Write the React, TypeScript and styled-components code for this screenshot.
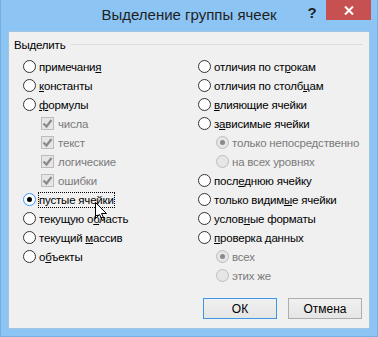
import React from "react";
import styled, { createGlobalStyle } from "styled-components";

const GlobalStyle = createGlobalStyle`
  html, body {
    margin: 0;
    padding: 0;
    background: #ffffff;
  }
  body {
    font-family: "Liberation Sans", Arial, sans-serif;
    font-size: 11.5px;
    letter-spacing: -0.2px;
    color: #000;
  }
`;

const Window = styled.div`
  width: 378px;
  height: 337px;
  box-sizing: border-box;
  background: #8cc4f4;
  box-shadow: inset 1px 0 0 #78aee0, inset -1px 0 0 #78aee0, inset 0 -1px 0 #78aee0;
  display: flex;
  flex-direction: column;
`;

const TitleBar = styled.div`
  height: 31px;
  flex: none;
  display: grid;
  grid-template-columns: 1fr auto 1fr;
  align-items: start;
`;

const Title = styled.div`
  grid-column: 2;
  font-size: 15px;
  letter-spacing: 0;
  line-height: 30px;
  color: #1f1f1f;
  white-space: nowrap;
`;

const Controls = styled.div`
  grid-column: 3;
  justify-self: end;
  display: flex;
  align-items: flex-start;
  margin-right: 7px;
`;

const HelpButton = styled.div`
  width: 28px;
  height: 24px;
  line-height: 26px;
  text-align: center;
  font-size: 15px;
  font-weight: bold;
  color: #222;
`;

const CloseButton = styled.div`
  width: 45px;
  height: 20px;
  background: #c75050;
  display: flex;
  align-items: center;
  justify-content: center;
`;

const Content = styled.div`
  flex: 1;
  margin: 0 8px 8px 8px;
  border: 1px solid #a3c3e3;
  background: #f0f0f0;
  display: flex;
  flex-direction: column;
`;

const Group = styled.div`
  padding: 5px 6px 0 5px;
`;

const GroupHeader = styled.div`
  display: flex;
  align-items: center;
  gap: 6px;
  line-height: 16px;
`;

const GroupLine = styled.div`
  flex: 1;
  height: 1px;
  background: #dcdcdc;
  margin-top: -1px;
`;

const GroupBody = styled.div`
  display: flex;
  margin-top: 4px;
  padding-left: 9px;
`;

const Column = styled.div<{ $width?: number }>`
  display: flex;
  flex-direction: column;
  width: ${(p) => (p.$width ? `${p.$width}px` : "auto")};
  flex: ${(p) => (p.$width ? "none" : "1")};
`;

const Row = styled.div<{ $indent?: boolean }>`
  position: relative;
  height: 19px;
  display: flex;
  align-items: center;
  gap: 3px;
  padding-left: ${(p) => (p.$indent ? "18px" : "0")};
`;

const RadioCircle = styled.span<{ $disabled?: boolean; $hot?: boolean }>`
  width: 13px;
  height: 13px;
  box-sizing: border-box;
  border-radius: 50%;
  flex: none;
  display: flex;
  align-items: center;
  justify-content: center;
  border: 1px solid ${(p) => (p.$hot ? "#3399ff" : p.$disabled ? "#bcbcbc" : "#333333")};
  background: ${(p) => (p.$disabled ? "#e6e6e6" : "#ffffff")};
`;

const RadioDot = styled.span<{ $disabled?: boolean }>`
  width: 5px;
  height: 5px;
  border-radius: 50%;
  background: ${(p) => (p.$disabled ? "#8a8a8a" : "#000000")};
`;

const CheckBox = styled.span`
  width: 13px;
  height: 13px;
  box-sizing: border-box;
  flex: none;
  border: 1px solid #bcbcbc;
  background: #e6e6e6;
  display: flex;
  align-items: center;
  justify-content: center;
  margin-right: 1px;
`;

const Label = styled.span<{ $disabled?: boolean; $focused?: boolean }>`
  display: inline-block;
  line-height: 14px;
  white-space: nowrap;
  color: ${(p) => (p.$disabled ? "#7a7a7a" : "#000000")};
  outline: ${(p) => (p.$focused ? "1px dotted #000" : "none")};
`;

const Key = styled.span`
  text-decoration: underline;
`;

const Cursor = styled.svg`
  position: absolute;
  left: 72px;
  top: 12px;
`;

const Footer = styled.div`
  margin-top: auto;
  display: flex;
  justify-content: flex-end;
  gap: 11px;
  padding: 0 7px 9px 0;
`;

const Button = styled.div<{ $default?: boolean }>`
  width: 74px;
  height: 21px;
  box-sizing: border-box;
  display: flex;
  align-items: center;
  justify-content: center;
  font-size: 12px;
  letter-spacing: 0;
  border: 1px solid ${(p) => (p.$default ? "#3d95e8" : "#adadad")};
  background: linear-gradient(#f0f0f0, #e5e5e5);
  color: #000;
`;

type Opt = {
  text: React.ReactNode;
  kind: "radio" | "check";
  indent?: boolean;
  checked?: boolean;
  disabled?: boolean;
  focused?: boolean;
};

const u = (before: string, key: string, after: string) => (
  <>
    {before}
    <Key>{key}</Key>
    {after}
  </>
);

const leftOptions: Opt[] = [
  { text: u("примечани", "я", ""), kind: "radio" },
  { text: u("", "к", "онстанты"), kind: "radio" },
  { text: u("", "ф", "ормулы"), kind: "radio" },
  { text: "числа", kind: "check", indent: true, checked: true, disabled: true },
  { text: "текст", kind: "check", indent: true, checked: true, disabled: true },
  { text: "логические", kind: "check", indent: true, checked: true, disabled: true },
  { text: "ошибки", kind: "check", indent: true, checked: true, disabled: true },
  { text: "пустые ячейки", kind: "radio", checked: true, focused: true },
  { text: u("текущую о", "б", "ласть"), kind: "radio" },
  { text: u("текущий ", "м", "ассив"), kind: "radio" },
  { text: u("о", "б", "ъекты"), kind: "radio" },
];

const rightOptions: Opt[] = [
  { text: u("отличия по ст", "р", "окам"), kind: "radio" },
  { text: u("отличия по столб", "ц", "ам"), kind: "radio" },
  { text: u("", "в", "лияющие ячейки"), kind: "radio" },
  { text: u("з", "а", "висимые ячейки"), kind: "radio" },
  { text: "только непосредственно", kind: "radio", indent: true, checked: true, disabled: true },
  { text: "на всех уровнях", kind: "radio", indent: true, disabled: true },
  { text: u("посл", "е", "днюю ячейку"), kind: "radio" },
  { text: u("только видим", "ы", "е ячейки"), kind: "radio" },
  { text: u("услов", "н", "ые форматы"), kind: "radio" },
  { text: u("", "п", "роверка данных"), kind: "radio" },
  { text: "всех", kind: "radio", indent: true, checked: true, disabled: true },
  { text: "этих же", kind: "radio", indent: true, disabled: true },
];

const CheckMark = () => (
  <svg width="11" height="11" viewBox="0 0 11 11">
    <path d="M1.5 5.5 L4.5 8.5 L9.5 2" fill="none" stroke="#8a8a8a" strokeWidth="2.2" />
  </svg>
);

const MouseCursor = () => (
  <Cursor width="13" height="20" viewBox="0 0 13 20">
    <polygon
      points="0.5,0.5 0.5,16.5 4.5,12.5 7.5,18.5 9.5,17.5 6.5,11.5 11.5,11.5"
      fill="#ffffff"
      stroke="#000000"
      strokeWidth="1"
    />
  </Cursor>
);

const Option = ({ opt }: { opt: Opt }) => (
  <Row $indent={opt.indent}>
    {opt.kind === "radio" ? (
      <RadioCircle $disabled={opt.disabled} $hot={opt.focused}>
        {opt.checked && <RadioDot $disabled={opt.disabled} />}
      </RadioCircle>
    ) : (
      <CheckBox>{opt.checked && <CheckMark />}</CheckBox>
    )}
    <Label $disabled={opt.disabled} $focused={opt.focused}>
      {opt.text}
    </Label>
    {opt.focused && <MouseCursor />}
  </Row>
);

const App = () => {
  return (
    <>
      <GlobalStyle />
      <Window>
        <TitleBar>
          <Title>Выделение группы ячеек</Title>
          <Controls>
            <HelpButton>?</HelpButton>
            <CloseButton>
              <svg width="10" height="9" viewBox="0 0 10 9">
                <path d="M1 0.5 L9 8.5 M9 0.5 L1 8.5" stroke="#ffffff" strokeWidth="2" />
              </svg>
            </CloseButton>
          </Controls>
        </TitleBar>
        <Content>
          <Group>
            <GroupHeader>
              <span>Выделить</span>
              <GroupLine />
            </GroupHeader>
            <GroupBody>
              <Column $width={175}>
                {leftOptions.map((o, i) => (
                  <Option key={i} opt={o} />
                ))}
              </Column>
              <Column>
                {rightOptions.map((o, i) => (
                  <Option key={i} opt={o} />
                ))}
              </Column>
            </GroupBody>
          </Group>
          <Footer>
            <Button $default>ОК</Button>
            <Button>Отмена</Button>
          </Footer>
        </Content>
      </Window>
    </>
  );
};

export default App;
